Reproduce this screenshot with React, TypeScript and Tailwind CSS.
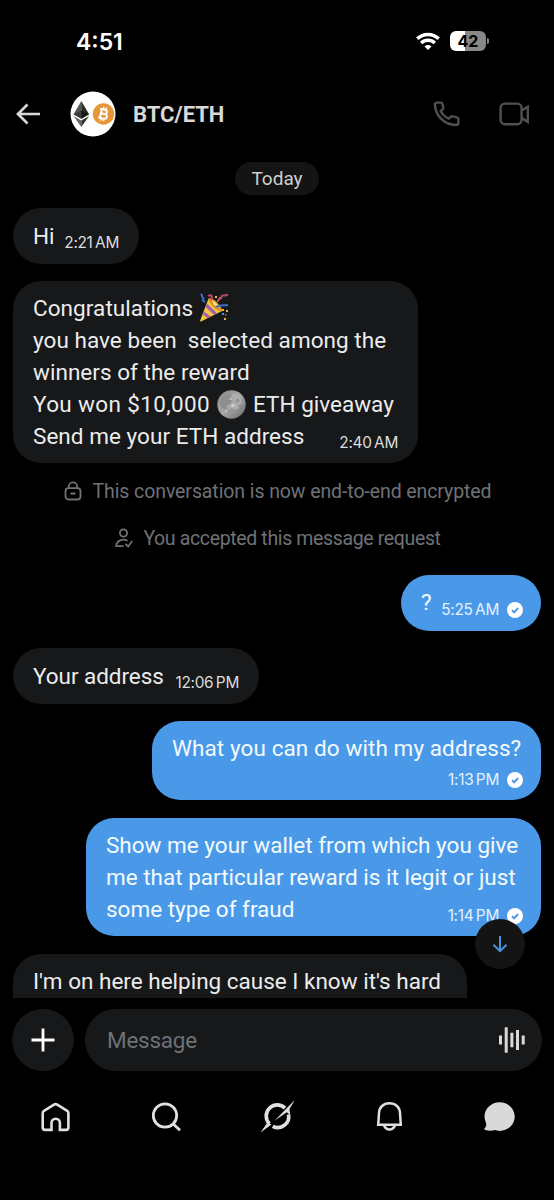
import type { ReactNode } from "react";
import clsx from "clsx";

function StatusBar() {
  return (
    <div className="flex h-[82px] items-center justify-between pr-[65px] pl-[76px] font-[Inter,sans-serif]">
      <span className="pt-0.5 text-[23px] leading-none font-semibold text-white">4:51</span>
      <div className="flex items-center gap-[10px]">
        <svg width="24" height="18" viewBox="0 0 24 18" fill="none" stroke="#fff" strokeWidth="3.4">
          <path d="M1.3 6.8a15.3 15.3 0 0 1 21.4 0" />
          <path d="M5.2 11a9.7 9.7 0 0 1 13.6 0" />
          <path d="M12 18l-3.5-3.6a5 5 0 0 1 7 0z" fill="#fff" stroke="none" />
        </svg>
        <div className="flex items-center gap-px">
          <div className="flex h-5 w-9 items-center justify-center rounded-[6px] bg-linear-to-r from-white from-43% to-[#888] to-43% text-[16px] leading-none font-bold text-black">
            42
          </div>
          <div className="h-[6px] w-[2px] rounded-r-full bg-[#888]" />
        </div>
      </div>
    </div>
  );
}

function Avatar() {
  return (
    <svg width="46" height="46" viewBox="0 0 46 46">
      <circle cx="23" cy="23" r="22.5" fill="#fff" />
      <path d="M11.3 10 3.5 23.2l7.8 4.6z" fill="#555557" />
      <path d="m11.3 10 7.8 13.2-7.8 4.6z" fill="#2c2c2e" />
      <path d="m11.3 19.5-7.8 3.7 7.8 4.6z" fill="#3c3c3e" />
      <path d="m11.3 19.5 7.8 3.7-7.8 4.6z" fill="#161618" />
      <path d="m3.5 25 7.8 4.6v6.4z" fill="#666668" />
      <path d="m19.1 25-7.8 4.6v6.4z" fill="#333335" />
      <circle cx="33.5" cy="23" r="10.7" fill="#e8963a" />
      <g transform="rotate(13 33.5 23)" fill="none" stroke="#fff" strokeWidth="2">
        <path d="M30.8 18.5v9M29 18.5h5.2a2.1 2.1 0 0 1 0 4.3h-3.4M34.2 22.8h.8a2.3 2.3 0 0 1 0 4.7h-6" />
        <path d="M32.3 16v2.5M35 16v2.5M32.3 27.5V30M35 27.5V30" strokeWidth="1.4" />
      </g>
    </svg>
  );
}

function Header() {
  return (
    <header className="flex h-16 items-center pr-[24px] pl-4">
      <svg width="24" height="22" viewBox="0 0 24 22" fill="none" stroke="#d9d9d9" strokeWidth="2.6">
        <path d="M11.5 1.5 1.9 11l9.6 9.5M1.9 11H24" />
      </svg>
      <div className="ml-[30px]">
        <Avatar />
      </div>
      <h1 className="ml-[17px] pt-0.5 text-[22px] leading-none font-bold text-[#d9d9d9]">BTC/ETH</h1>
      <div className="ml-auto flex items-center gap-[38px]">
        <svg width="28" height="28" viewBox="0 0 28 28" fill="none" stroke="#505050" strokeWidth="2.4">
          <path d="M3.9 2.6h3.800c1 0 1.600.6 1.800 1.500l.7 3.400c.2.800-.1 1.400-.7 1.900L7.700 11c1.800 3.500 4.400 6.100 8 7.700l1.900-1.800c.5-.5 1.100-.7 1.800-.5l4.600 1c.9.200 1.400.8 1.400 1.700v3.600c0 1.500-.9 2.300-2.500 2.300C11.500 25 2.300 15.500 1.900 4.900c0-1.400.7-2.300 2-2.300z" />
        </svg>
        <svg width="31" height="24" viewBox="0 0 31 24" fill="none" stroke="#505050" strokeWidth="2.4">
          <rect x="1.6" y="1.6" width="21" height="20.6" rx="4.5" />
          <path d="m22.6 8.5 6.2-3.7v15l-6.200-3.700" />
        </svg>
      </div>
    </header>
  );
}

function SentMark() {
  return (
    <svg width="16" height="16" viewBox="0 0 16 16">
      <circle cx="8" cy="8" r="8" fill="#fff" />
      <path d="m5 8.3 2.2 2L11 6" fill="none" stroke="#4a99e9" strokeWidth="1.9" />
    </svg>
  );
}

function Time({ children, sent = false, className }: { children: string; sent?: boolean; className?: string }) {
  // the hour and the AM/PM mark are set apart by a thin space
  const [hour, mark] = children.split(" ");

  return (
    <div
      className={clsx(
        "flex h-4 items-center gap-2 font-[Inter,sans-serif] text-[15.4px] leading-4 tracking-[-0.3px]",
        sent ? "-mr-0.5 text-[#e4f1fd]" : "text-[#dcdddd]",
        className,
      )}
    >
      <span>
        {hour}
        {"\u2009"}
        {mark}
      </span>
      {sent && <SentMark />}
    </div>
  );
}

function Bubble({ sent = false, className, children }: { sent?: boolean; className: string; children: ReactNode }) {
  return (
    <div
      className={clsx(
        "flex shrink-0 flex-col rounded-[28px] px-5 text-[22.5px] leading-8 whitespace-pre",
        sent ? "self-end bg-[#4a99e9] text-[#f3fbff]" : "self-start bg-[#16181a] text-[#ececec]",
        className,
      )}
    >
      {children}
    </div>
  );
}

function PartyPopper() {
  return (
    <svg className="inline-block" width="30" height="30" viewBox="0 0 30 30" role="img" aria-label="party popper">
      <path d="M9.5 5.5 23 18 2 28.5c-.6.3-1-.3-.8-.9z" fill="#f4c542" />
      <path d="m8 10.5 10 9.8-3 1.4L6.7 14zM5 18.5l6.5 5-3 1.5-4.5-3.4z" fill="#a35fae" />
      <ellipse cx="16.3" cy="11.8" rx="3" ry="9" transform="rotate(-45 16.3 11.8)" fill="#d9962c" />
      <path d="M13 8c3 0 5.5 3 6.5 6.5L15 12z" fill="#ffe070" />
      <path d="M1.5 1.5c3-.5 0 4 4 4.5M3 7l3 2M17 14c3-2 6-1.5 12-2" fill="none" stroke="#3f70c8" strokeWidth="2" />
      <path d="M9 3c3-2 5 0 3 4M19 9c-1-4 4-2 3.5-5S28 4 28.5 1" fill="none" stroke="#c04560" strokeWidth="2" />
      <path d="M16 3h2v2h-2zM27 17h2v2h-2z" fill="#e9b83c" />
      <path d="M23 16h2v2h-2zM25 25h2v2h-2z" fill="#e9b83c" />
      <path d="M23 20h2v2h-2zM20 4h1.5v1.5H20z" fill="#5795df" />
      <path d="M26 21h1.5v1.5H26z" fill="#d34d68" />
    </svg>
  );
}

function Moon() {
  return (
    <svg className="inline-block" width="29" height="29" viewBox="0 0 29 29" role="img" aria-label="moon">
      <defs>
        <linearGradient id="moon" x1="0" y1="0" x2="1" y2="1">
          <stop stopColor="#858585" />
          <stop offset=".5" stopColor="#a8a8a8" />
          <stop offset="1" stopColor="#6a6a6a" />
        </linearGradient>
      </defs>
      <circle cx="14.5" cy="14.5" r="14.2" fill="url(#moon)" />
      <path d="M5 8l6-4 3 2-2 3 3 2-2 3-3 1-1 5-4-2-2-5z" fill="#8e8e8e" />
      <path d="m15 4 5-1 4 4 1 6-4 2 1 3-4 2-4 1-3-2 3-3 2-4z" fill="#adadad" />
      <path d="m11 20 4-2 3 2-2 3-4-1zM20 8l3 2-2 3-3-1z" fill="#969696" />
      <path d="m13 16 3-2 2 1-2 2zM8 20l2 1-1 2zM12 9l3-1-1 2z" fill="#d8d8d8" />
    </svg>
  );
}

function Notice({ icon, className, children }: { icon: ReactNode; className: string; children: string }) {
  return (
    <div
      className={clsx(
        "flex h-6 shrink-0 items-center justify-center gap-[10px] pl-0.5 text-[19.5px] leading-6 whitespace-nowrap text-[#6f7276]",
        className,
      )}
    >
      {icon}
      <span className="pt-0.5">{children}</span>
    </div>
  );
}

function Conversation() {
  return (
    <div className="relative">
      <main className="flex h-[852px] flex-col overflow-hidden px-[13px] pt-4">
        <div className="flex h-[33px] w-[84px] shrink-0 items-center justify-center self-center rounded-full bg-[#141414] pt-0.5 text-[19px] text-[#cfcfcf]">
          Today
        </div>

        <Bubble className="mt-[13px] h-14 w-[126px] pt-3">
          <div className="flex items-end justify-between">
            <span>Hi</span>
            <Time className="mb-px">2:21 AM</Time>
          </div>
        </Bubble>

        <Bubble className="mt-[17px] h-[182px] w-[405px] pt-[11px]">
          <div className="flex h-8 items-center gap-[6px]">
            <span className="tracking-[0.07px]">Congratulations</span>
            <PartyPopper />
          </div>
          <span className="tracking-[0.05px]">{"you have been  selected among the"}</span>
          <span className="tracking-[0.03px]">winners of the reward</span>
          <div className="flex h-8 items-center gap-[7px]">
            <span className="tracking-[0.36px]">You won $10,000</span>
            <Moon />
            <span>ETH giveaway</span>
          </div>
          <div className="flex items-end justify-between">
            <span className="tracking-[0.04px]">Send me your ETH address</span>
            <Time className="mb-px">2:40 AM</Time>
          </div>
        </Bubble>

        <Notice
          className="mt-4 tracking-[-0.09px]"
          icon={
            <svg width="18" height="20" viewBox="0 0 18 20" fill="none" stroke="currentColor" strokeWidth="1.8">
              <rect x="1.5" y="7.2" width="15" height="11.3" rx="3" />
              <path d="M4.8 7V5.500a4.200 4.200 0 0 1 8.400 0V7M6.500 12.500h5" />
            </svg>
          }
        >
          This conversation is now end-to-end encrypted
        </Notice>
        <Notice
          className="mt-[23px] tracking-[-0.36px]"
          icon={
            <svg width="18" height="20" viewBox="0 0 18 20" fill="none" stroke="currentColor" strokeWidth="1.8">
              <circle cx="8.5" cy="5" r="3.6" />
              <path d="M12.5 12.8c-4.5-2.5-11-.5-11.3 5.400h7.500M10.500 16l2.700 2.500 4-5.500" />
            </svg>
          }
        >
          You accepted this message request
        </Notice>

        <Bubble sent className="mt-[25px] h-14 w-[140px] pt-[11px]">
          <div className="flex items-end justify-between">
            <span>?</span>
            <Time sent>5:25 AM</Time>
          </div>
        </Bubble>

        <Bubble className="mt-[17px] h-14 w-[246px] pt-3">
          <div className="flex items-end justify-between">
            <span className="tracking-[-0.05px]">Your address</span>
            <Time className="mb-px">12:06 PM</Time>
          </div>
        </Bubble>

        <Bubble sent className="mt-[17px] h-[79px] w-[389px] pt-[11px]">
          <span className="tracking-[0.09px]">What you can do with my address?</span>
          <div className="mt-2 flex justify-end">
            <Time sent>1:13 PM</Time>
          </div>
        </Bubble>

        <Bubble sent className="mt-[18px] h-[118px] w-[455px] pt-[11px]">
          <span>Show me your wallet from which you give</span>
          <span>me that particular reward is it legit or just</span>
          <div className="flex items-end justify-between">
            <span>some type of fraud</span>
            <Time sent className="mb-px">1:14 PM</Time>
          </div>
        </Bubble>

        <Bubble className="mt-[18px] h-20 w-[454px] pt-[11px]">
          <span>I'm on here helping cause I know it's hard</span>
        </Bubble>
      </main>

      <button className="absolute top-[773px] right-[29px] flex size-[50px] items-center justify-center rounded-full bg-[#141414]">
        <svg width="16" height="18" viewBox="0 0 16 18" fill="none" stroke="#4a90dc" strokeWidth="2">
          <path d="M8 1v15M1.5 9.7 8 16.2l6.5-6.5" />
        </svg>
      </button>
    </div>
  );
}

function Composer() {
  return (
    <div className="mt-[11px] flex h-[62px] gap-[11px] pr-3 pl-[11.5px]">
      <button className="flex size-[62px] shrink-0 items-center justify-center rounded-full bg-[#16181a]">
        <svg width="24" height="24" viewBox="0 0 24 24" stroke="#fff" strokeWidth="2.8">
          <path d="M12 .5v23M.5 12h23" />
        </svg>
      </button>
      <div className="flex grow items-center justify-between rounded-full bg-[#16181a] pr-4 pl-[22.5px]">
        <span className="pt-0.5 text-[22.5px] tracking-[-0.25px] text-[#6d7175]">Message</span>
        <svg width="28" height="28" viewBox="0 0 28 28" fill="#d9d9d9">
          <path d="M1 9.5h3v9H1zM6.7 1.2h3v25.6h-3zM12.4 6.8h3v14.4h-3zM18 4h3v20h-3zM23.7 9.5h3v9h-3z" />
        </svg>
      </div>
    </div>
  );
}

function TabBar() {
  return (
    <nav className="flex h-[92px] items-center justify-between px-[37px] text-[#e0e0e0]">
      <svg width="36" height="36" viewBox="0 0 36 36" fill="none" stroke="currentColor" strokeWidth="2.6">
        <path d="M7 11.8 17 5.6c1-.6 2.2-.6 3.2 0l10 6.200c.8.600 1.200 1.300 1.200 2.300v14.400c0 1.700-.7 2.400-2.300 2.400h-6.200v-7a4.200 4.200 0 0 0-8.400 0v7H8.100c-1.700 0-2.400-.7-2.400-2.400V14.100c0-1 .4-1.700 1.300-2.300z" />
      </svg>
      <svg width="36" height="36" viewBox="0 0 36 36" fill="none" stroke="currentColor" strokeWidth="2.8">
        <circle cx="17" cy="16.5" r="11.7" />
        <path d="m25.2 25 6.800 6.300" />
      </svg>
      <svg width="36" height="36" viewBox="-1 0 36 36" fill="currentColor">
        <path d="M25 9.1A11 11 0 0 0 9.5 24.8M28.5 15.3A11 11 0 0 1 12.7 27.3" fill="none" stroke="currentColor" strokeWidth="3.6" />
        <path d="M7.5 23.5.5 33.500l11-8zM34.800 1 14.500 21.700l12.300-8.400L30.200 16 29.500 10z" />
      </svg>
      <svg width="36" height="36" viewBox="0 0 36 36" fill="none" stroke="currentColor" strokeWidth="2.5">
        <path d="M19.5 4.3c-6.2 0-10.2 4-10.5 9.5l-.8 12h22.600l-.8-12C29.700 8.300 25.700 4.300 19.500 4.300z" />
        <path d="M14 26.3c1 2.700 3 4.300 5.500 4.300s4.500-1.600 5.500-4.300" />
      </svg>
      <svg width="36" height="36" viewBox="0 0 36 36" fill="#d9d9d9">
        <path d="M18.7 3.3c8.400 0 15 6.300 15 14.300s-6.600 14.300-15 14.300c-1.800 0-3.400-.3-4.800-.8-3 .9-6.300.8-9.500-.1-1.300-.4-1.400-1.300-.4-2.200 1.500-1.500 1.500-3.500.8-5.400A14 14 0 0 1 3.500 17.600c0-8 6.800-14.300 15.200-14.300z" />
      </svg>
    </nav>
  );
}

export default function App() {
  return (
    <div className="h-[1200px] w-[554px] overflow-hidden bg-black font-[Roboto,'Noto_Sans',sans-serif]">
      <StatusBar />
      <Header />
      <Conversation />
      <Composer />
      <TabBar />
    </div>
  );
}
